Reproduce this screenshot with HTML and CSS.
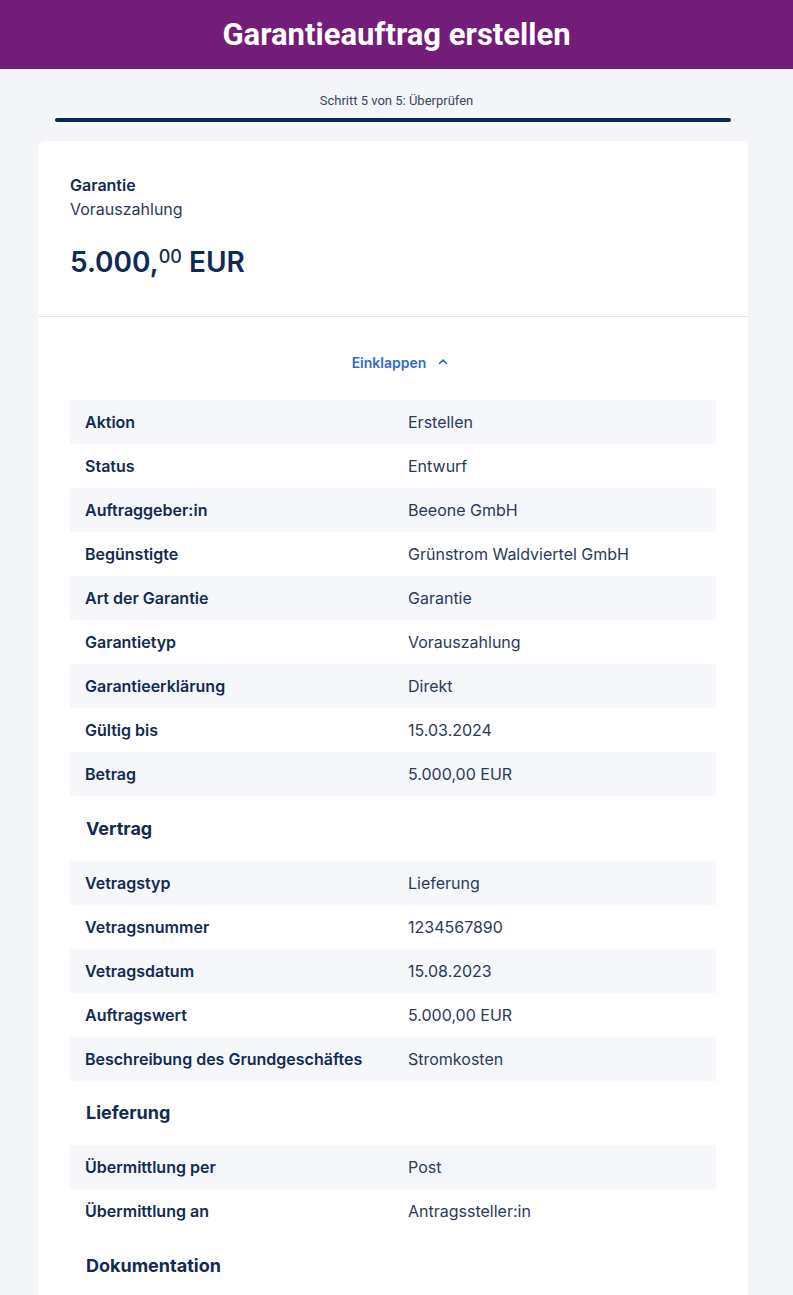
FILE: index.html
```html
<!DOCTYPE html>
<html lang="de">
<head>
<meta charset="utf-8">
<title>Garantieauftrag erstellen</title>
<link rel="stylesheet" href="styles.css">
</head>
<body>
<header class="topbar"><h1>Garantieauftrag erstellen</h1></header>
<div class="progress">
  <div class="progress-label">Schritt 5 von 5: Überprüfen</div>
  <div class="progress-bar"></div>
</div>
<main class="card">
  <section class="summary">
    <div class="sum-title">Garantie</div>
    <div class="sum-sub">Vorauszahlung</div>
    <div class="amount">5.000,<sup>00</sup> EUR</div>
  </section>
  <section class="details">
    <div class="toggle">Einklappen
      <svg width="10" height="8" viewBox="0 0 10 8"><path d="M1.5 5.5 L5 2 L8.5 5.5" fill="none" stroke="#2f6bcf" stroke-width="1.6" stroke-linecap="round" stroke-linejoin="round"/></svg>
    </div>
    <div class="table">
      <div class="row alt"><div class="k">Aktion</div><div class="v">Erstellen</div></div>
      <div class="row"><div class="k">Status</div><div class="v">Entwurf</div></div>
      <div class="row alt"><div class="k">Auftraggeber:in</div><div class="v">Beeone GmbH</div></div>
      <div class="row"><div class="k">Begünstigte</div><div class="v">Grünstrom Waldviertel GmbH</div></div>
      <div class="row alt"><div class="k">Art der Garantie</div><div class="v">Garantie</div></div>
      <div class="row"><div class="k">Garantietyp</div><div class="v">Vorauszahlung</div></div>
      <div class="row alt"><div class="k">Garantieerklärung</div><div class="v">Direkt</div></div>
      <div class="row"><div class="k">Gültig bis</div><div class="v">15.03.2024</div></div>
      <div class="row alt"><div class="k">Betrag</div><div class="v">5.000,00 EUR</div></div>
      <h2 class="group">Vertrag</h2>
      <div class="row alt"><div class="k">Vetragstyp</div><div class="v">Lieferung</div></div>
      <div class="row"><div class="k">Vetragsnummer</div><div class="v">1234567890</div></div>
      <div class="row alt"><div class="k">Vetragsdatum</div><div class="v">15.08.2023</div></div>
      <div class="row"><div class="k">Auftragswert</div><div class="v">5.000,00 EUR</div></div>
      <div class="row alt"><div class="k">Beschreibung des Grundgeschäftes</div><div class="v">Stromkosten</div></div>
      <h2 class="group">Lieferung</h2>
      <div class="row alt"><div class="k">Übermittlung per</div><div class="v">Post</div></div>
      <div class="row"><div class="k">Übermittlung an</div><div class="v">Antragssteller:in</div></div>
      <h2 class="group">Dokumentation</h2>
    </div>
  </section>
</main>
</body>
</html>
```
FILE: styles.css
```css
* { box-sizing: border-box; }
html, body { margin: 0; padding: 0; }
body {
  background: #f3f5f8;
  font-family: Inter, "Noto Sans", sans-serif;
  color: #132a52;
}
.topbar {
  background: #731c79;
  height: 69px;
  display: flex;
  align-items: center;
  justify-content: center;
}
.topbar h1 {
  margin: 0;
  color: #fff;
  font-family: Roboto, "Liberation Sans", sans-serif;
  font-weight: 700;
  font-size: 31px;
  letter-spacing: 0;
}
.progress {
  padding: 24px 62px 0 55px;
}
.progress-label {
  text-align: center;
  font-family: Roboto, "Liberation Sans", sans-serif;
  font-size: 13px;
  line-height: 16px;
  color: #3a4560;
  padding-left: 7px;
}
.progress-bar {
  margin-top: 9px;
  height: 4px;
  border-radius: 2px;
  background: #0b2855;
}
.card {
  margin: 19px 45px 0 38px;
  background: #fff;
  border-radius: 7px 7px 0 0;
  min-height: 1160px;
}
.summary {
  padding: 32px 32px 36px;
  border-bottom: 1px solid #e3e6ea;
}
.sum-title {
  font-size: 16px;
  line-height: 24px;
  font-weight: 600;
}
.sum-sub {
  font-size: 16px;
  line-height: 24px;
  color: #2b3a58;
}
.amount {
  margin-top: 23px;
  font-size: 28px;
  line-height: 36px;
  font-weight: 600;
  color: #0f2a55;
}
.amount sup {
  font-size: 18px;
  vertical-align: 9px;
  line-height: 0;
  font-weight: 500;
}
.details {
  padding: 35px 32px 0;
}
.toggle {
  display: flex;
  align-items: center;
  justify-content: center;
  gap: 12px;
  height: 20px;
  padding-left: 14px;
  font-size: 14px;
  font-weight: 600;
  color: #2f6bcf;
  margin-bottom: 28px;
}
.table { display: flex; flex-direction: column; }
.row {
  display: grid;
  grid-template-columns: 1fr 1fr;
  height: 44px;
  align-items: center;
  font-size: 16px;
}
.row.alt { background: #f5f7fa; }
.k { padding-left: 15px; font-weight: 600; color: #132a52; }
.v { padding-left: 15px; color: #2b3a58; }
.group {
  margin: 0;
  height: 64.5px;
  display: flex;
  align-items: center;
  padding-left: 16px;
  font-size: 18px;
  font-weight: 700;
  color: #132a52;
}
```
